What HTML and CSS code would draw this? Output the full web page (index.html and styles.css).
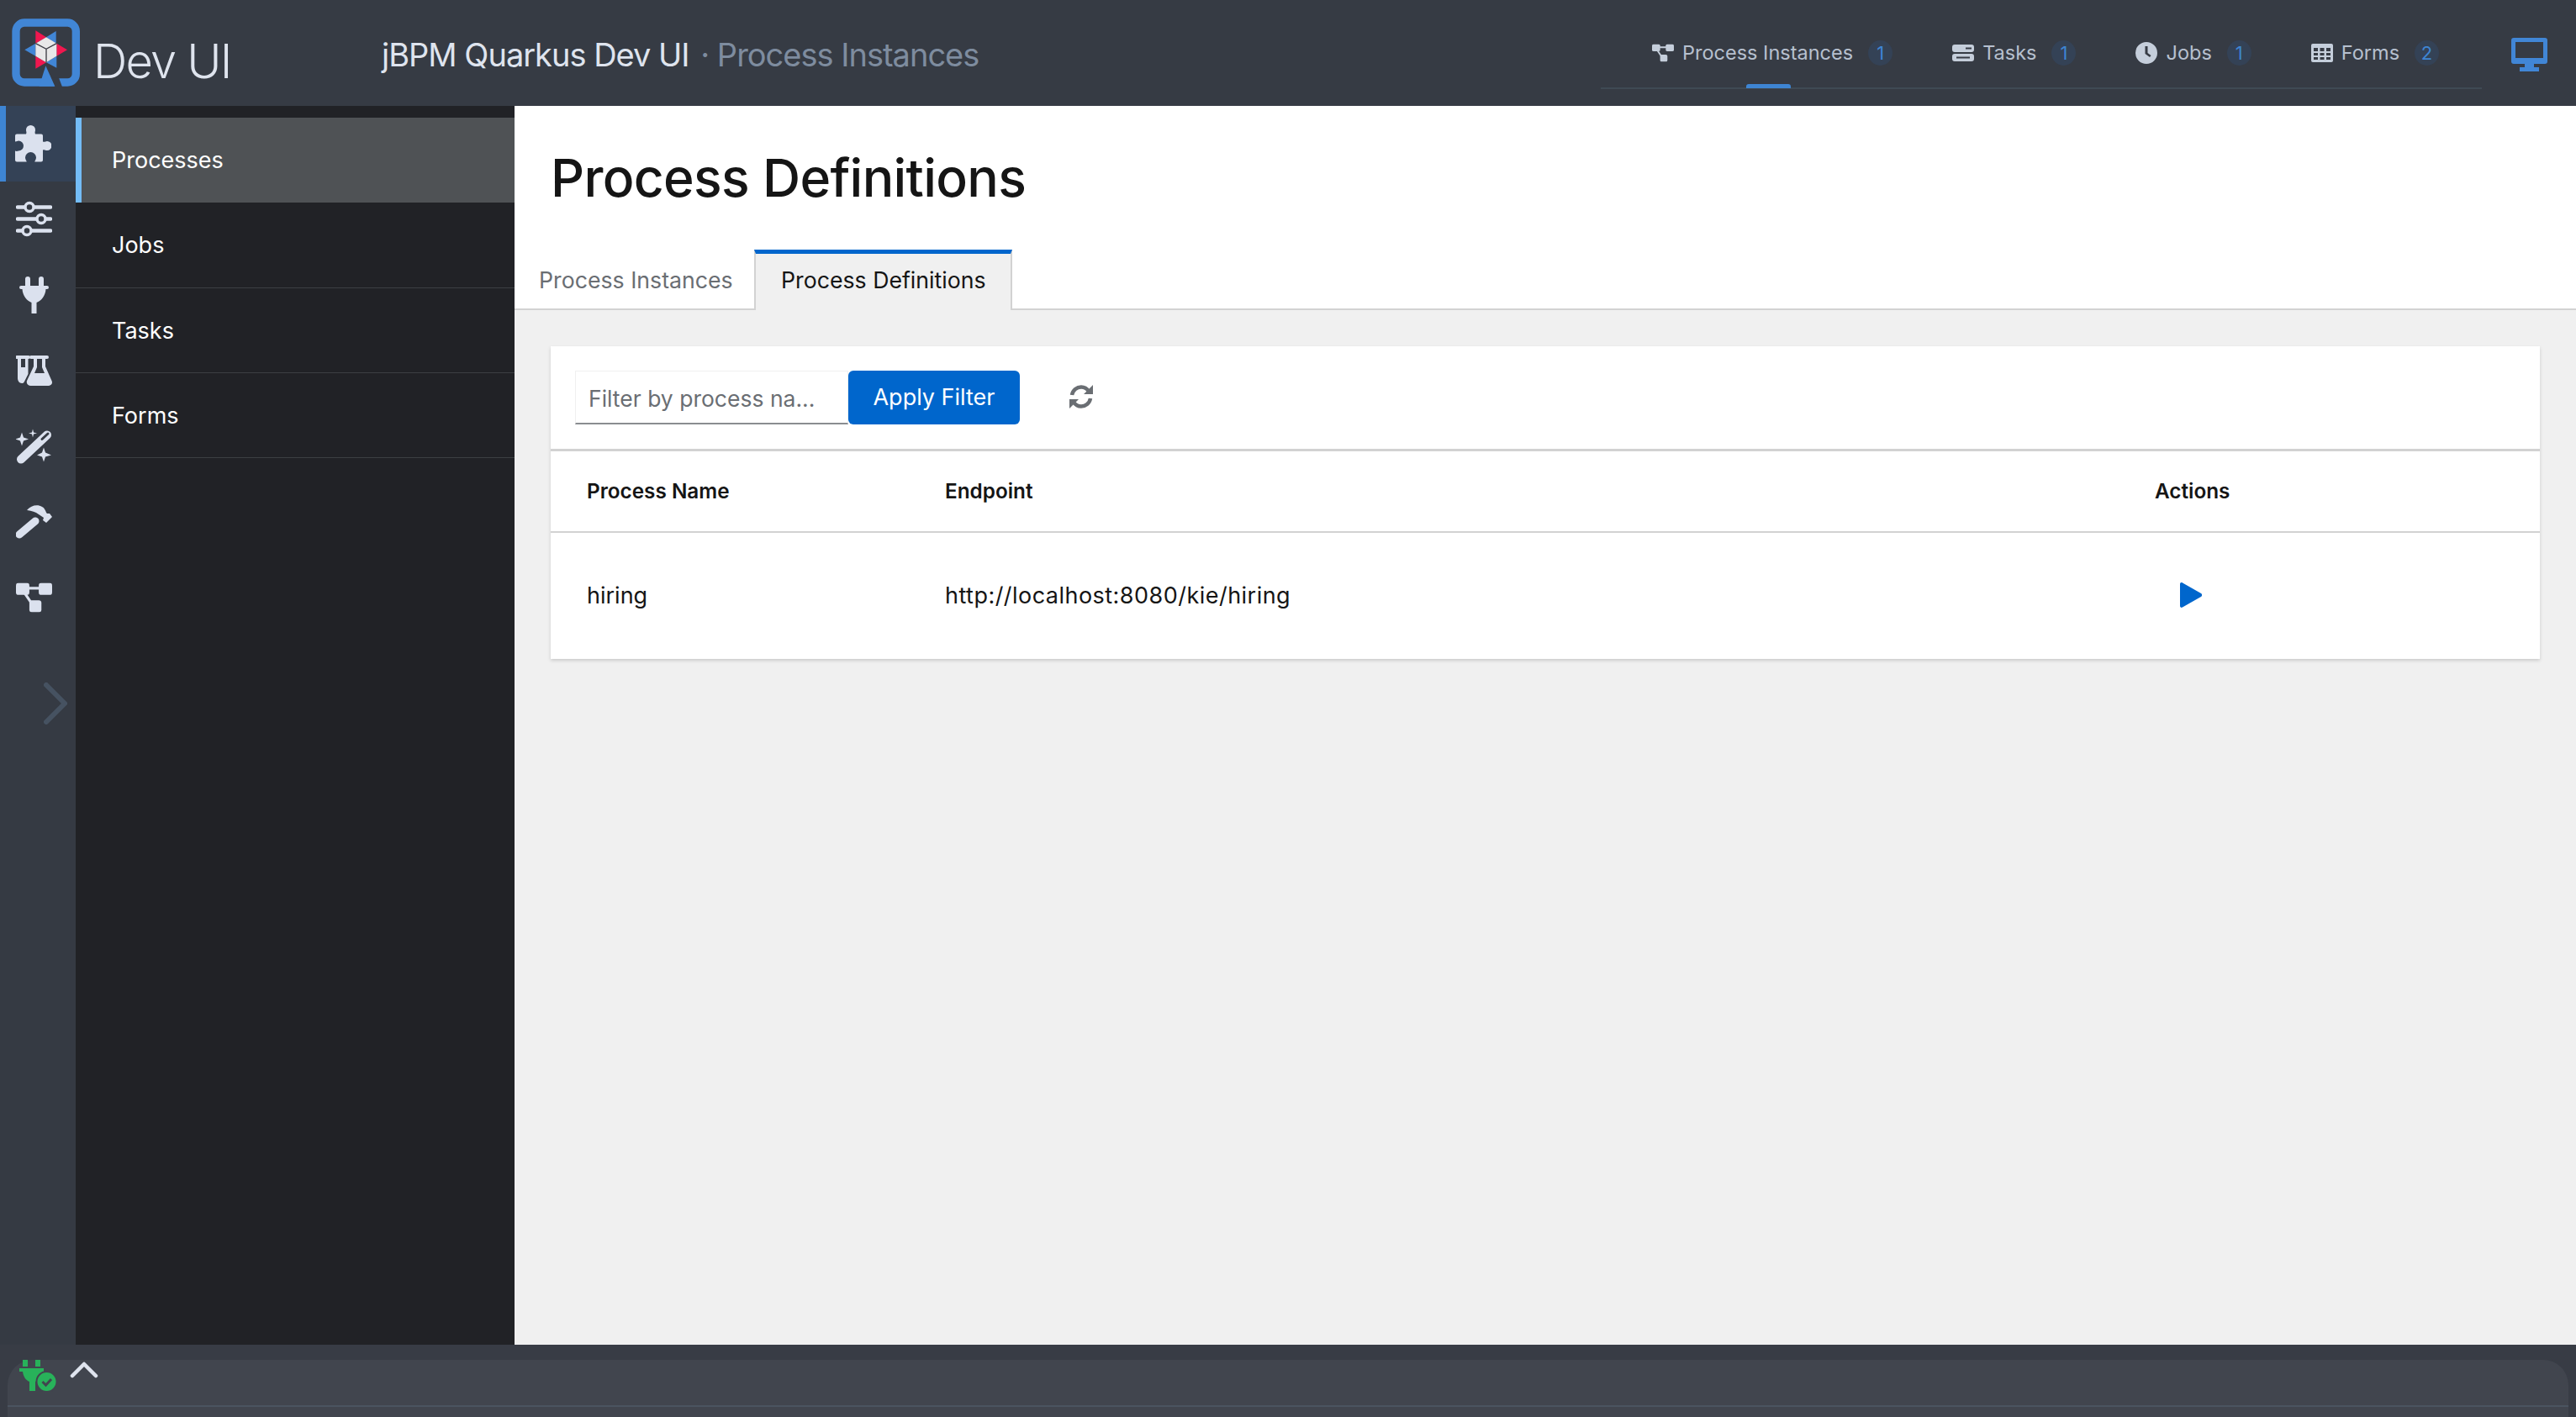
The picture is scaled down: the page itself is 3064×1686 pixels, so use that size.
FILE: index.html
```html
<!DOCTYPE html>
<html lang="en">
<head>
    <meta charset="UTF-8">
    <meta name="viewport" content="width=device-width, initial-scale=1.0">
    <title>Dev UI - jBPM Quarkus Dev UI</title>
    <link rel="stylesheet" href="styles.css">
</head>
<body>
    <!-- Top bar -->
    <header class="topbar">
        <svg class="logo" viewBox="0 0 300 285">
            <rect x="27" y="36" width="214" height="213" rx="30" fill="none" stroke="#4186d6" stroke-width="28"/>
            <polygon points="150,233 180,233 192,265 165,265" fill="#363b44"/>
            <polygon points="133,190 110,263 166,263" fill="#4186d6"/>
            <polygon points="97,64 135,88 97,110" fill="#f0174f"/>
            <polygon points="170,66 170,110 135,88" fill="#4186d6"/>
            <polygon points="172,110 210,133 172,155" fill="#f0174f"/>
            <polygon points="58,133 97,110 97,155" fill="#4186d6"/>
            <polygon points="97,155 135,178 97,200" fill="#f0174f"/>
            <polygon points="172,155 172,197 135,178" fill="#4186d6"/>
            <polygon points="135,88 172,110 172,155 135,178 97,155 97,110" fill="#e8e8e8"/>
            <path d="M97 110L135 130L172 110M135 130V178" fill="none" stroke="#3c3c44" stroke-width="4"/>
        </svg>
        <span class="brand">Dev UI</span>
        <div class="page-title">jBPM Quarkus Dev UI <span class="page-sub">· Process Instances</span></div>
        <nav class="top-tabs">
            <a class="top-tab">
                <svg class="top-icon" viewBox="0 0 27 22"><use href="#icon-nodes"/></svg>
                <span>Process Instances</span>
                <span class="count">1</span>
            </a>
            <a class="top-tab">
                <svg class="top-icon" viewBox="0 0 26 20">
                    <path fill-rule="evenodd" d="M3 0H23A3 3 0 0 1 26 3V6A3 3 0 0 1 23 9H3A3 3 0 0 1 0 6V3A3 3 0 0 1 3 0ZM16 3.500V5.500H23V3.500ZM3 11H23A3 3 0 0 1 26 14V17A3 3 0 0 1 23 20H3A3 3 0 0 1 0 17V14A3 3 0 0 1 3 11ZM5 14.500V16.500H21V14.500Z"/>
                </svg>
                <span>Tasks</span>
                <span class="count">1</span>
            </a>
            <a class="top-tab">
                <svg class="top-icon" viewBox="0 0 26 26">
                    <path fill-rule="evenodd" d="M13 0A13 13 0 1 1 13 26A13 13 0 0 1 13 0ZM11.500 5V14L17 18L18.500 16L14.500 13V5Z"/>
                </svg>
                <span>Jobs</span>
                <span class="count">1</span>
            </a>
            <a class="top-tab">
                <svg class="top-icon" viewBox="0 0 26 22">
                    <path fill-rule="evenodd" d="M2 0H24A2 2 0 0 1 26 2V20A2 2 0 0 1 24 22H2A2 2 0 0 1 0 20V2A2 2 0 0 1 2 0ZM3 5V9H8V5ZM10.500 5V9H15.500V5ZM18 5V9H23V5ZM3 11V14H8V11ZM10.500 11V14H15.500V11ZM18 11V14H23V11ZM3 16V19H8V16ZM10.500 16V19H15.500V16ZM18 16V19H23V16Z"/>
                </svg>
                <span>Forms</span>
                <span class="count">2</span>
            </a>
            <span class="top-tab-marker"></span>
        </nav>
        <svg class="monitor" viewBox="0 0 43 40">
            <path fill-rule="evenodd" d="M3 0H40A3 3 0 0 1 43 3V28A3 3 0 0 1 40 31H27V35H33V40H10V35H16V31H3A3 3 0 0 1 0 28V3A3 3 0 0 1 3 0ZM5 5V24H38V5Z"/>
        </svg>
    </header>

    <div class="middle">
        <!-- Icon rail -->
        <aside class="rail">
            <div class="rail-item rail-active">
                <svg class="rail-icon" viewBox="0 0 43 43">
                    <path d="M13 10C14 8 13 7 13 5A5.500 5.500 0 0 1 24 5C24 7 23 8 24 10H31A2 2 0 0 1 33 12V19C35 20 36 18.500 38 18.500A5.500 5.500 0 0 1 38 29.500C36 29.500 35 28 33 29V41A2 2 0 0 1 31 43H24C22 43 25 41 25 38A6.500 6.500 0 0 0 12 38C12 41 15 43 13 43H2A2 2 0 0 1 0 41V30C2 31 3 30 4 30A6 6 0 0 0 4 18C3 18 2 19 0 19V12A2 2 0 0 1 2 10Z"/>
                </svg>
            </div>
            <div class="rail-item">
                <svg class="rail-icon" viewBox="0 0 43 43">
                    <path d="M2 7H41M2 21H41M2 35H41" stroke="#dbe1ee" stroke-width="4.500" stroke-linecap="round"/>
                    <circle cx="16" cy="7" r="5" fill="#363b44" stroke="#dbe1ee" stroke-width="3.500"/>
                    <circle cx="30" cy="21" r="5" fill="#363b44" stroke="#dbe1ee" stroke-width="3.500"/>
                    <circle cx="13" cy="35" r="5" fill="#363b44" stroke="#dbe1ee" stroke-width="3.500"/>
                </svg>
            </div>
            <div class="rail-item">
                <svg class="rail-icon" viewBox="0 0 43 44">
                    <path d="M11 3A3 3 0 0 1 17 3V11H27V3A3 3 0 0 1 33 3V11H37A2 2 0 0 1 37 15H35.500C35 23 30 29 24.500 31V44H18.500V31C13 29 8 23 7.500 15H6A2 2 0 0 1 6 11H11Z"/>
                </svg>
            </div>
            <div class="rail-item">
                <svg class="rail-icon" viewBox="0 0 43 36">
                    <path fill-rule="evenodd" d="M1 0H15A1.500 1.500 0 0 1 15 4H14.500V22L10 31C9 33 8 33 7 33C4 33 2 30 2 27V4H1A1.500 1.500 0 0 1 1 0ZM6 4V14H11V4Z"/>
                    <path fill-rule="evenodd" d="M18 0H37A1.500 1.500 0 0 1 37 4H35V13L42.500 30C44 33 42 36 39 36H17C14 36 12 33 13 30L21 13V4H18A1.500 1.500 0 0 1 18 0ZM25 4V14L22 21H34L31 14V4Z"/>
                </svg>
            </div>
            <div class="rail-item">
                <svg class="rail-icon" viewBox="0 0 43 41">
                    <path d="M6 36L37 7" stroke="#dbe1ee" stroke-width="10" stroke-linecap="round"/>
                    <path d="M31 12L38 5.500" stroke="#363b44" stroke-width="3" stroke-linecap="round"/>
                    <path d="M7 4L9 10L15 12L9 14L7 20L5 14L-1 12L5 10ZM20 0L21 4L25 5L21 6L20 10L19 6L15 5L19 4ZM33 22L35 28L42 31L35 33L33 39L31 33L25 31L31 28Z"/>
                </svg>
            </div>
            <div class="rail-item">
                <svg class="rail-icon" viewBox="0 0 43 40">
                    <path d="M4 35L23 19" stroke="#dbe1ee" stroke-width="9" stroke-linecap="round"/>
                    <path d="M13 6C18 0 26 -1 31 2C35 4 35 8 37 10L40 10L43 14L36 21L32 18L33 15L27 11C23 8 19 7 13 6Z"/>
                </svg>
            </div>
            <div class="rail-item">
                <svg class="rail-icon" viewBox="0 0 27 22"><use href="#icon-nodes"/></svg>
            </div>
            <svg class="rail-chevron" viewBox="0 0 28 50">
                <path d="M3 3L25 25L3 47" fill="none" stroke="#465261" stroke-width="6" stroke-linecap="round" stroke-linejoin="round"/>
            </svg>
        </aside>

        <!-- Section menu -->
        <nav class="side-menu">
            <a class="menu-item menu-active">Processes</a>
            <a class="menu-item">Jobs</a>
            <a class="menu-item">Tasks</a>
            <a class="menu-item">Forms</a>
        </nav>

        <!-- Page content -->
        <main class="content">
            <section class="page-head">
                <h1>Process Definitions</h1>
                <div class="tabs">
                    <a class="tab">Process Instances</a>
                    <a class="tab tab-active">Process Definitions</a>
                </div>
            </section>
            <section class="page-body">
                <div class="card">
                    <div class="toolbar">
                        <input class="filter-input" type="text" placeholder="Filter by process na...">
                        <button class="apply-btn">Apply Filter</button>
                        <svg class="refresh" viewBox="0 0 30 30">
                            <path d="M4 13C5 7 10 3.500 15 3.500C19 3.500 22 5.500 24 8.500M26 17C25 23 20 26.500 15 26.500C11 26.500 8 24.500 6 21.500" fill="none" stroke="#6a6e73" stroke-width="4.500"/>
                            <path d="M29 1V12H18ZM1 29V18H12Z" fill="#6a6e73"/>
                        </svg>
                    </div>
                    <table class="defs-table">
                        <thead>
                            <tr>
                                <th class="col-name">Process Name</th>
                                <th class="col-endpoint">Endpoint</th>
                                <th>Actions</th>
                            </tr>
                        </thead>
                        <tbody>
                            <tr>
                                <td>hiring</td>
                                <td class="endpoint">http://localhost:8080/kie/hiring</td>
                                <td>
                                    <svg class="play" viewBox="0 0 26 30">
                                        <path d="M3 0.500L25 13C26.500 14 26.500 16 25 17L3 29.500C1.500 30.500 0 29.500 0 28V2C0 0.500 1.500 -0.500 3 0.500Z"/>
                                    </svg>
                                </td>
                            </tr>
                        </tbody>
                    </table>
                </div>
            </section>
        </main>
    </div>

    <!-- Bottom drawer -->
    <footer class="footer">
        <div class="drawer">
            <div class="drawer-top">
                <svg class="status-icon" viewBox="0 0 44 38">
                    <path d="M4 0H10V8H4ZM19 0H25V8H19Z" fill="#28b25a"/>
                    <path d="M0 10H29V14H27C26 21 23 24 19 26V37H12V26C8 24 5 21 4 14H0Z" fill="#28b25a"/>
                    <circle cx="32.500" cy="26" r="12" fill="#28b25a" stroke="#41454e" stroke-width="2"/>
                    <path d="M27.500 26L31.500 30L38 23" fill="none" stroke="#41454e" stroke-width="3"/>
                </svg>
                <svg class="drawer-chevron" viewBox="0 0 34 20">
                    <path d="M3 17L17 3L31 17" fill="none" stroke="#dfe4ee" stroke-width="4.500" stroke-linecap="round" stroke-linejoin="round"/>
                </svg>
            </div>
            <div class="drawer-line"></div>
        </div>
    </footer>

    <svg class="icon-defs">
        <symbol id="icon-nodes" viewBox="0 0 27 22">
            <path d="M4 4H23M4 4L13.500 18" stroke="currentColor" stroke-width="2"/>
            <rect x="0" y="0" width="10" height="9" rx="2"/>
            <rect x="17" y="0" width="10" height="9" rx="2"/>
            <rect x="10" y="13" width="9" height="9" rx="2"/>
        </symbol>
    </svg>
</body>
</html>
```

FILE: styles.css
```css
/* Global Styles */
body, html {
    margin: 0;
    padding: 0;
    height: 100%;
    overflow: hidden;
}

body {
    display: flex;
    flex-direction: column;
    background: #383c45;
    font-family: 'Inter', sans-serif;
}

.icon-defs {
    display: none;
}

/* Top bar */
.topbar {
    height: 126px;
    flex: none;
    display: flex;
    align-items: flex-start;
    background: #363b44;
    position: relative;
}

.logo {
    width: 100px;
    height: 95px;
    margin: 15px 0 0 10px;
    flex: none;
}

.brand {
    margin: 37px 0 0 1px;
    width: 343px;
    font-size: 56px;
    line-height: 72px;
    font-weight: 300;
    letter-spacing: -1.8px;
    color: #dfe4ee;
}

.page-title {
    margin-top: 40px;
    font-size: 38px;
    line-height: 50px;
    font-weight: 400;
    letter-spacing: -1px;
    color: #dfe4ee;
    white-space: nowrap;
}

.page-sub {
    margin-left: 4px;
    color: #7e8c9f;
}

.top-tabs {
    position: absolute;
    left: 1904px;
    top: 44px;
    width: 1048px;
    height: 62px;
    border-bottom: 2px solid #3f4a54;
    display: flex;
    gap: 71px;
    padding-left: 61px;
    box-sizing: border-box;
}

.top-tab {
    display: flex;
    align-items: flex-start;
    height: 38px;
    line-height: 38px;
    font-size: 23.5px;
    color: #b6c0cf;
    white-space: nowrap;
}

.top-icon {
    width: 26px;
    height: 38px;
    margin-right: 10px;
    fill: #c5cedb;
    color: #c5cedb;
}

.count {
    width: 29px;
    height: 30px;
    margin: 4px 0 0 18px;
    border-radius: 50%;
    background: #344256;
    color: #3e85d3;
    font-size: 22px;
    line-height: 30px;
    text-align: center;
}

.top-tab-marker {
    position: absolute;
    left: 173px;
    top: 56px;
    width: 53px;
    height: 5px;
    border-radius: 3px 3px 0 0;
    background: #3e85d3;
}

.monitor {
    position: absolute;
    left: 2987px;
    top: 45px;
    width: 43px;
    height: 40px;
    fill: #4186d6;
}

/* Middle area */
.middle {
    height: 1474px;
    flex: none;
    display: flex;
}

/* Icon rail */
.rail {
    width: 90px;
    flex: none;
    background: #353a43;
}

.rail-item {
    height: 90px;
    display: flex;
    align-items: center;
    justify-content: center;
    padding-right: 10px;
}

.rail-active {
    background: #344256;
    border-left: 7px solid #3e85d3;
    box-sizing: border-box;
    padding-right: 18px;
}

.rail-icon {
    width: 43px;
    height: 44px;
    fill: #dbe1ee;
    color: #dbe1ee;
}

.rail-chevron {
    display: block;
    width: 28px;
    height: 50px;
    margin: 56px 0 0 52px;
}

/* Section menu */
.side-menu {
    width: 522px;
    flex: none;
    background: #212226;
    padding-top: 14px;
    box-sizing: border-box;
}

.menu-item {
    display: block;
    height: 101.25px;
    line-height: 102px;
    padding-left: 43px;
    box-sizing: border-box;
    border-bottom: 1px solid #3c3f42;
    font-size: 27px;
    color: #ffffff;
}

.menu-active {
    background: #4f5255;
    border-left: 7px solid #73bcf7;
    padding-left: 36px;
    border-bottom: none;
}

/* Page content */
.content {
    flex: 1;
    display: flex;
    flex-direction: column;
    background: #f0f0f0;
}

.page-head {
    height: 243px;
    flex: none;
    box-sizing: border-box;
    background: #ffffff;
    border-bottom: 2px solid #d2d2d2;
    display: flex;
    flex-direction: column;
}

h1 {
    margin: 43px 0 0 43px;
    height: 128px;
    flex: none;
    font-size: 62.5px;
    line-height: 84px;
    font-weight: 500;
    letter-spacing: -0.7px;
    color: #151515;
}

.tabs {
    display: flex;
    height: 70px;
    flex: none;
}

.tab {
    width: 285px;
    padding-left: 29px;
    box-sizing: border-box;
    font-size: 26.7px;
    line-height: 72px;
    color: #6a6e73;
}

.tab-active {
    width: 307px;
    padding: 0 0 0 30px;
    height: 72px;
    background: #f0f0f0;
    border-top: 5px solid #0066cc;
    border-left: 2px solid #d2d2d2;
    border-right: 2px solid #d2d2d2;
    line-height: 62px;
    color: #151515;
}

.page-body {
    padding: 43px 43px 0;
}

.card {
    background: #ffffff;
    box-shadow: 0 2px 4px rgba(3, 3, 3, 0.16);
}

.toolbar {
    height: 125px;
    box-sizing: border-box;
    padding: 29px 0 0 29px;
    border-bottom: 3px solid #d2d2d2;
    display: flex;
    align-items: flex-start;
}

.filter-input {
    width: 325px;
    height: 64px;
    box-sizing: border-box;
    padding: 2px 15px 0;
    border: 1px solid #f0f0f0;
    border-bottom: 2px solid #8a8d90;
    outline: none;
    font-family: inherit;
    font-size: 26.5px;
}

.filter-input::placeholder {
    color: #6a6e73;
    opacity: 1;
}

.apply-btn {
    width: 204px;
    height: 64px;
    padding: 0 0 2px;
    border: none;
    border-radius: 6px;
    background: #0066cc;
    color: #ffffff;
    font-family: inherit;
    font-size: 27px;
}

.refresh {
    width: 30px;
    height: 30px;
    margin: 16px 0 0 58px;
}

.defs-table {
    width: 100%;
    border-collapse: collapse;
    table-layout: fixed;
}

.defs-table th,
.defs-table td {
    padding: 0 0 2px 43px;
    text-align: left;
    font-size: 27px;
    font-weight: 400;
    color: #151515;
}

.defs-table th {
    height: 93px;
    font-weight: 600;
    font-size: 24.3px;
    border-bottom: 2px solid #d2d2d2;
}

.defs-table td {
    height: 148px;
}

.defs-table .endpoint {
    letter-spacing: 0.47px;
}

.col-name {
    width: 383px;
}

.col-endpoint {
    width: 1396px;
}

.play {
    display: block;
    width: 26px;
    height: 30px;
    margin-left: 30px;
    fill: #0066cc;
}

/* Bottom drawer */
.footer {
    flex: 1;
    padding: 18px 9px 0;
}

.drawer {
    height: 68px;
    background: #41454e;
    border-radius: 30px 30px 0 0;
}

.drawer-top {
    height: 54px;
    display: flex;
    align-items: flex-start;
    padding-left: 14px;
}

.status-icon {
    width: 44px;
    height: 38px;
}

.drawer-chevron {
    width: 34px;
    height: 20px;
    margin: 2px 0 0 16px;
}

.drawer-line {
    height: 2px;
    background: #4b5460;
}
```
